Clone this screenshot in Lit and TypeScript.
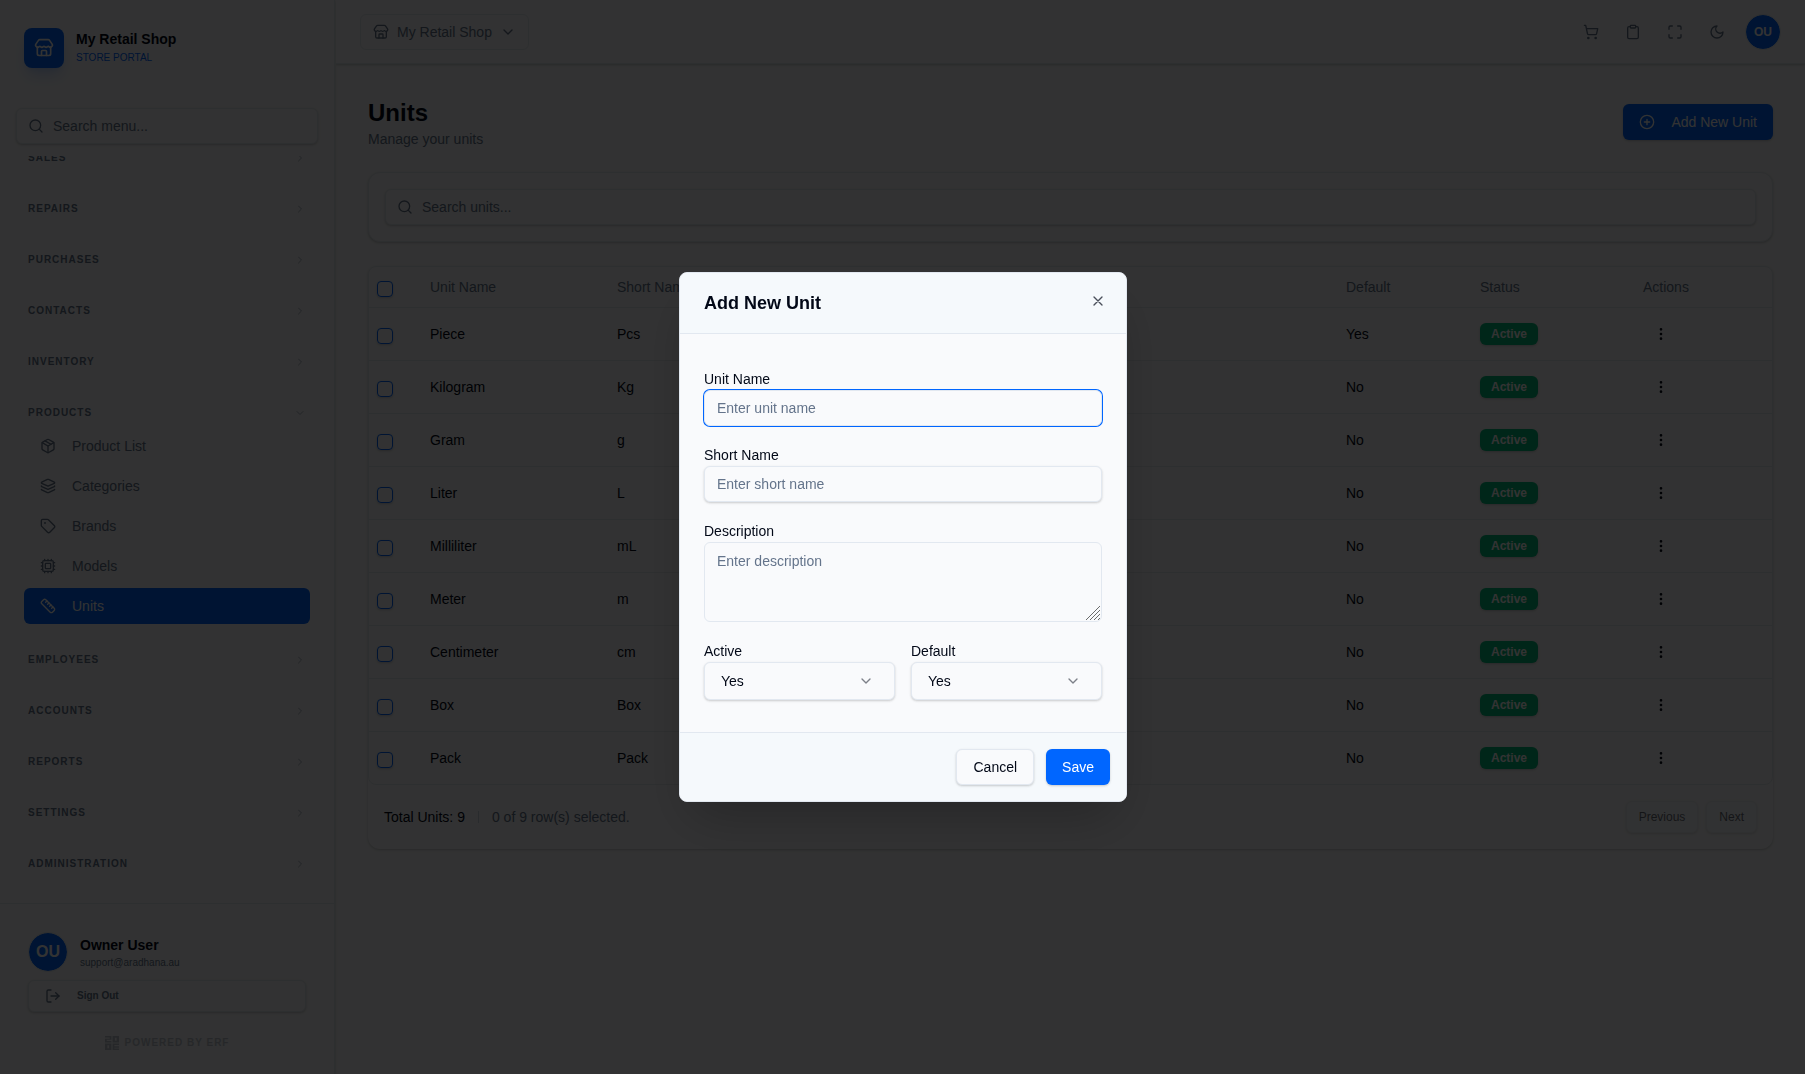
import { LitElement, html, css, svg } from "lit";
import { customElement, property, state } from "lit/decorators.js";
import { classMap } from "lit/directives/class-map.js";

const ICONS: Record<string, unknown> = {
  store: svg`<path d="M15 21v-5a1 1 0 0 0-1-1h-4a1 1 0 0 0-1 1v5"/><path d="M17.774 10.31a1.12 1.12 0 0 0-1.549 0 2.5 2.5 0 0 1-3.451 0 1.12 1.12 0 0 0-1.548 0 2.5 2.5 0 0 1-3.452 0 1.12 1.12 0 0 0-1.549 0 2.5 2.5 0 0 1-3.77-3.248l2.889-4.184A2 2 0 0 1 7 2h10a2 2 0 0 1 1.653.873l2.895 4.192a2.5 2.5 0 0 1-3.774 3.244"/><path d="M4 10.95V19a2 2 0 0 0 2 2h12a2 2 0 0 0 2-2v-8.05"/>`,
  search: svg`<circle cx="11" cy="11" r="8"/><path d="m21 21-4.300-4.300"/>`,
  chevronRight: svg`<path d="m9 18 6-6-6-6"/>`,
  chevronDown: svg`<path d="m6 9 6 6 6-6"/>`,
  package: svg`<path d="M11 21.73a2 2 0 0 0 2 0l7-4A2 2 0 0 0 21 16V8a2 2 0 0 0-1-1.730l-7-4a2 2 0 0 0-2 0l-7 4A2 2 0 0 0 3 8v8a2 2 0 0 0 1 1.730z"/><path d="M12 22V12"/><path d="M3.290 7 12 12l8.710-5"/><path d="m7.500 4.270 9 5.150"/>`,
  layers: svg`<path d="M12.830 2.180a2 2 0 0 0-1.660 0L2.600 6.080a1 1 0 0 0 0 1.830l8.580 3.910a2 2 0 0 0 1.660 0l8.580-3.900a1 1 0 0 0 0-1.830z"/><path d="M2 12a1 1 0 0 0 .58.91l8.600 3.910a2 2 0 0 0 1.650 0l8.580-3.900A1 1 0 0 0 22 12"/><path d="M2 17a1 1 0 0 0 .58.91l8.600 3.910a2 2 0 0 0 1.650 0l8.580-3.900A1 1 0 0 0 22 17"/>`,
  tag: svg`<path d="M12.586 2.586A2 2 0 0 0 11.172 2H4a2 2 0 0 0-2 2v7.172a2 2 0 0 0 .586 1.414l8.704 8.704a2.426 2.426 0 0 0 3.420 0l6.580-6.580a2.426 2.426 0 0 0 0-3.420z"/><circle cx="7.500" cy="7.500" r=".5" fill="currentColor"/>`,
  cpu: svg`<rect x="4" y="4" width="16" height="16" rx="2"/><rect x="8" y="8" width="8" height="8" rx="1"/><path d="M12 20v2M12 2v2M17 20v2M17 2v2M2 12h2M2 17h2M2 7h2M20 12h2M20 17h2M20 7h2M7 20v2M7 2v2"/>`,
  ruler: svg`<path d="M21.300 15.300a2.400 2.400 0 0 1 0 3.400l-2.600 2.600a2.400 2.400 0 0 1-3.400 0L2.700 8.700a2.410 2.410 0 0 1 0-3.400l2.600-2.600a2.410 2.410 0 0 1 3.400 0z"/><path d="m14.500 12.500 2-2M11.500 9.500l2-2M8.500 6.500l2-2M17.500 15.500l2-2"/>`,
  logout: svg`<path d="m16 17 5-5-5-5"/><path d="M21 12H9"/><path d="M9 21H5a2 2 0 0 1-2-2V5a2 2 0 0 1 2-2h4"/>`,
  cart: svg`<circle cx="8" cy="21" r="1"/><circle cx="19" cy="21" r="1"/><path d="M2.050 2.050h2l2.660 12.420a2 2 0 0 0 2 1.580h9.780a2 2 0 0 0 1.950-1.570l1.650-7.430H5.120"/>`,
  clipboard: svg`<rect x="8" y="2" width="8" height="4" rx="1"/><path d="M16 4h2a2 2 0 0 1 2 2v14a2 2 0 0 1-2 2H6a2 2 0 0 1-2-2V6a2 2 0 0 1 2-2h2"/>`,
  expand: svg`<path d="M8 3H5a2 2 0 0 0-2 2v3M21 8V5a2 2 0 0 0-2-2h-3M3 16v3a2 2 0 0 0 2 2h3M16 21h3a2 2 0 0 0 2-2v-3"/>`,
  moon: svg`<path d="M12 3a6 6 0 0 0 9 9 9 9 0 1 1-9-9Z"/>`,
  plus: svg`<circle cx="12" cy="12" r="10"/><path d="M8 12h8M12 8v8"/>`,
  close: svg`<path d="M18 6 6 18M6 6l12 12"/>`,
  dots: svg`<circle cx="12" cy="12" r="1"/><circle cx="12" cy="5" r="1"/><circle cx="12" cy="19" r="1"/>`,
  blocks: svg`<g fill="currentColor" stroke="none"><path d="M0 0h11v6.500H3v2h8V11H0V4.500h8v-2H0z"/><path fill-rule="evenodd" d="M13 0h11v11H13zM17 3v5h3V3z"/><path fill-rule="evenodd" d="M0 13h11v11H0zM4 16v5h3v-5z"/><path d="M13 13h11v2.500h-8v2h8v2.500h-8v1.500h8V24H13z"/></g>`,
};

@customElement("ui-icon")
class UiIcon extends LitElement {
  @property() name = "";
  @property({ type: Number }) size = 16;

  static styles = css`
    :host { display: inline-flex; flex: none; }
    svg { display: block; fill: none; stroke: currentColor; stroke-width: 2; stroke-linecap: round; stroke-linejoin: round; }
  `;

  render() {
    return html`<svg aria-hidden="true" viewBox="0 0 24 24" width=${this.size} height=${this.size}>${ICONS[this.name]}</svg>`;
  }
}

const tokens = css`
  :host {
    --bg: #f8fafc;
    --surface: #f9fafc;
    --tint: #f5f9fc;
    --fg: #020817;
    --muted: #64748b;
    --line: #e2e8f0;
    --primary: #0066ff;
    --shadow: 0 1px 3px rgba(0, 0, 0, 0.1), 0 1px 2px rgba(0, 0, 0, 0.1);
    color: var(--fg);
    font-family: "Liberation Sans", Arial, sans-serif;
    font-size: 14px;
    line-height: 20px;
  }
  * { box-sizing: border-box; }
  h1, h2, p { margin: 0; }
  a { color: inherit; text-decoration: none; }
  button, input, textarea, select { font: inherit; color: inherit; margin: 0; }
  button { cursor: pointer; background: none; border: 0; padding: 0; }
  ::placeholder { color: var(--muted); opacity: 1; }
  .input {
    display: block;
    width: 100%;
    height: 36px;
    padding: 0 12px;
    border: 1px solid var(--line);
    border-radius: 6px;
    background: var(--surface);
    box-shadow: var(--shadow);
    outline: none;
  }
  .input:focus { box-shadow: 0 0 0 1px var(--primary); }
  .search { display: grid; align-items: center; isolation: isolate; color: var(--muted); }
  .search > * { grid-area: 1 / 1; }
  .search ui-icon { margin-left: 12px; z-index: 1; pointer-events: none; }
  .search .input { padding-left: 36px; }
  .avatar {
    display: grid;
    place-items: center;
    flex: none;
    border: 1px solid var(--line);
    border-radius: 50%;
    background: var(--primary);
    background-clip: padding-box;
    color: #fff;
    font-weight: 700;
  }
  .button {
    display: inline-flex;
    align-items: center;
    justify-content: center;
    height: 36px;
    padding: 0 16px;
    border-radius: 6px;
    box-shadow: var(--shadow);
    white-space: nowrap;
  }
  .primary { background: var(--primary); color: #fff; }
  .outline { background: var(--surface); border: 1px solid var(--line); }
`;

interface Group { label: string; items?: { label: string; icon: string; active?: boolean }[] }

const GROUPS: Group[] = [
  { label: "SALES" },
  { label: "REPAIRS" },
  { label: "PURCHASES" },
  { label: "CONTACTS" },
  { label: "INVENTORY" },
  {
    label: "PRODUCTS",
    items: [
      { label: "Product List", icon: "package" },
      { label: "Categories", icon: "layers" },
      { label: "Brands", icon: "tag" },
      { label: "Models", icon: "cpu" },
      { label: "Units", icon: "ruler", active: true },
    ],
  },
  { label: "EMPLOYEES" },
  { label: "ACCOUNTS" },
  { label: "REPORTS" },
  { label: "SETTINGS" },
  { label: "ADMINISTRATION" },
];

@customElement("app-sidebar")
class AppSidebar extends LitElement {
  static styles = [tokens, css`
    :host {
      display: flex;
      flex-direction: column;
      min-height: 0;
      background: var(--surface);
      border-right: 1px solid var(--line);
      box-shadow: var(--shadow);
    }
    .brand { display: flex; align-items: center; gap: 12px; padding: 28px 24px 40px; }
    .logo {
      display: grid;
      place-items: center;
      width: 40px;
      height: 40px;
      border-radius: 8px;
      background: var(--primary);
      color: #fff;
      box-shadow: 0 10px 15px -3px rgba(0, 102, 255, 0.2), 0 4px 6px -4px rgba(0, 102, 255, 0.2);
    }
    .names { display: grid; gap: 1px; padding-bottom: 2px; }
    .store { font-weight: 700; }
    .portal { font-size: 10px; line-height: 15px; color: var(--primary); }
    .search { margin: 0 16px 12px; }
    nav {
      flex: 1;
      min-height: 0;
      overflow-y: auto;
      scrollbar-width: none;
      padding: 0 24px 24px;
    }
    .groups { display: grid; gap: 20px; }
    .group {
      display: flex;
      align-items: center;
      justify-content: space-between;
      width: 100%;
      height: 31px;
      padding: 0 4px;
      color: var(--muted);
      font-size: 10px;
      font-weight: 700;
      letter-spacing: 1px;
    }
    .group ui-icon { opacity: 0.5; }
    .items { display: grid; gap: 4px; }
    .item {
      display: flex;
      align-items: center;
      gap: 16px;
      height: 36px;
      padding: 0 16px;
      border-radius: 6px;
      color: var(--muted);
    }
    .item.active { background: var(--primary); color: #fff; }
    footer { padding: 16px 16px 24px; border-top: 1px solid var(--line); }
    .card { display: grid; gap: 8px; padding: 12px; border-radius: 12px; background: var(--bg); }
    .user { display: flex; align-items: center; gap: 12px; }
    .avatar { width: 40px; height: 40px; font-size: 16px; }
    .name { font-weight: 700; }
    .mail { font-size: 10px; line-height: 15px; color: var(--muted); }
    .signout {
      height: 32px;
      gap: 16px;
      justify-content: flex-start;
      font-size: 10px;
      font-weight: 700;
      color: var(--muted);
    }
    .powered {
      display: flex;
      align-items: center;
      justify-content: center;
      gap: 6px;
      margin-top: 11px;
      font-size: 10px;
      line-height: 15px;
      font-weight: 700;
      letter-spacing: 1px;
      color: var(--muted);
      opacity: 0.4;
    }
  `];

  firstUpdated() {
    const nav = this.renderRoot.querySelector("nav")!;
    nav.scrollTop = nav.scrollHeight;
  }

  render() {
    return html`
      <div class="brand">
        <span class="logo"><ui-icon name="store" size="20"></ui-icon></span>
        <div class="names">
          <div class="store">My Retail Shop</div>
          <div class="portal">STORE PORTAL</div>
        </div>
      </div>
      <div class="search">
        <ui-icon name="search"></ui-icon>
        <input class="input" type="search" placeholder="Search menu..." aria-label="Search menu" />
      </div>
      <nav>
        <div class="groups">
          ${GROUPS.map((group) => html`
            <div>
              <button class="group" aria-expanded=${group.items ? "true" : "false"}>
                ${group.label}
                <ui-icon name=${group.items ? "chevronDown" : "chevronRight"} size="12"></ui-icon>
              </button>
              ${group.items ? html`<div class="items">
                ${group.items.map((item) => html`
                  <a href="#" class=${classMap({ item: true, active: !!item.active })}>
                    <ui-icon name=${item.icon}></ui-icon>${item.label}
                  </a>`)}
              </div>` : null}
            </div>`)}
        </div>
      </nav>
      <footer>
        <div class="card">
          <div class="user">
            <span class="avatar">OU</span>
            <div>
              <div class="name">Owner User</div>
              <div class="mail">support@aradhana.au</div>
            </div>
          </div>
          <button class="button outline signout"><ui-icon name="logout"></ui-icon>Sign Out</button>
        </div>
        <div class="powered"><ui-icon name="blocks" size="14"></ui-icon>POWERED BY ERF</div>
      </footer>
    `;
  }
}

@customElement("app-header")
class AppHeader extends LitElement {
  static styles = [tokens, css`
    :host {
      display: flex;
      align-items: center;
      justify-content: space-between;
      height: 64px;
      padding: 0 24px;
      background: var(--surface);
      border-bottom: 1px solid var(--line);
      box-shadow: var(--shadow);
    }
    .shop { gap: 8px; padding: 0 12px; color: var(--muted); box-shadow: none; }
    .tools { display: flex; align-items: center; gap: 6px; }
    .tool { display: grid; place-items: center; width: 36px; height: 36px; color: var(--muted); }
    .avatar { width: 36px; height: 36px; margin-left: 4px; padding: 0; font-size: 12px; }
  `];

  render() {
    return html`
      <button class="button outline shop">
        <ui-icon name="store"></ui-icon>My Retail Shop<ui-icon name="chevronDown"></ui-icon>
      </button>
      <div class="tools">
        <button class="tool" aria-label="Point of sale"><ui-icon name="cart"></ui-icon></button>
        <button class="tool" aria-label="Orders"><ui-icon name="clipboard"></ui-icon></button>
        <button class="tool" aria-label="Full screen"><ui-icon name="expand"></ui-icon></button>
        <button class="tool" aria-label="Dark mode"><ui-icon name="moon"></ui-icon></button>
        <button class="avatar" aria-label="Account">OU</button>
      </div>
    `;
  }
}

const UNITS = [
  ["Piece", "Pcs", "Yes"],
  ["Kilogram", "Kg", "No"],
  ["Gram", "g", "No"],
  ["Liter", "L", "No"],
  ["Milliliter", "mL", "No"],
  ["Meter", "m", "No"],
  ["Centimeter", "cm", "No"],
  ["Box", "Box", "No"],
  ["Pack", "Pack", "No"],
];

@customElement("units-page")
class UnitsPage extends LitElement {
  static styles = [tokens, css`
    :host { display: grid; align-content: start; gap: 24px; padding: 32px; }
    .top { display: flex; align-items: center; justify-content: space-between; }
    h1 { font-size: 24px; line-height: 34px; font-weight: 700; }
    .sub { line-height: 18px; color: var(--muted); }
    .add { gap: 16px; }
    .filter {
      padding: 16px;
      border: 1px solid var(--line);
      border-radius: 12px;
      background: var(--surface);
      box-shadow: var(--shadow);
    }
    .list { border-radius: 8px 8px 12px 12px; background: var(--surface); box-shadow: var(--shadow); }
    .frame { border: 1px solid var(--line); border-radius: 8px; overflow: hidden; }
    table { width: 100%; table-layout: fixed; border-collapse: separate; border-spacing: 0; }
    th, td { padding: 0 8px; text-align: left; font-weight: 400; border-bottom: 1px solid var(--line); }
    th { height: 41px; color: var(--muted); }
    td { height: 53px; }
    tbody tr:last-child td { height: 52px; border-bottom: 0; }
    .check { width: 53px; padding-top: 4px; }
    .name { width: 187px; }
    .default { width: 134px; }
    .status { width: 163px; }
    .actions { width: 137px; }
    input[type="checkbox"] {
      appearance: none;
      display: block;
      width: 16px;
      height: 16px;
      border: 1px solid var(--primary);
      border-radius: 4px;
      box-shadow: var(--shadow);
    }
    .badge {
      display: inline-block;
      padding: 3px 11px;
      border-radius: 6px;
      background: #00bc7d;
      color: #fff;
      font-size: 12px;
      line-height: 16px;
      font-weight: 700;
      box-shadow: var(--shadow);
      vertical-align: middle;
    }
    .more { display: grid; place-items: center; width: 36px; height: 36px; }
    .foot { display: flex; align-items: center; justify-content: space-between; padding: 16px; }
    .counts { display: flex; align-items: center; gap: 13px; }
    .rule { width: 1px; height: 12px; background: #cbd5e1; }
    .muted { color: var(--muted); }
    .pager { display: flex; gap: 8px; }
    .page { height: 32px; padding: 0 12px; font-size: 12px; background: var(--tint); opacity: 0.6; }
  `];

  render() {
    return html`
      <div class="top">
        <div>
          <h1>Units</h1>
          <p class="sub">Manage your units</p>
        </div>
        <button class="button primary add"><ui-icon name="plus"></ui-icon>Add New Unit</button>
      </div>
      <div class="filter">
        <div class="search">
          <ui-icon name="search"></ui-icon>
          <input class="input" type="search" placeholder="Search units..." aria-label="Search units" />
        </div>
      </div>
      <div class="list">
        <div class="frame">
          <table>
            <thead>
              <tr>
                <th class="check"><input type="checkbox" aria-label="Select all" /></th>
                <th class="name">Unit Name</th>
                <th>Short Name</th>
                <th class="default">Default</th>
                <th class="status">Status</th>
                <th class="actions">Actions</th>
              </tr>
            </thead>
            <tbody>
              ${UNITS.map(([name, short, isDefault]) => html`
                <tr>
                  <td class="check"><input type="checkbox" aria-label="Select ${name}" /></td>
                  <td>${name}</td>
                  <td>${short}</td>
                  <td>${isDefault}</td>
                  <td><span class="badge">Active</span></td>
                  <td><button class="more" aria-label="Actions for ${name}"><ui-icon name="dots"></ui-icon></button></td>
                </tr>`)}
            </tbody>
          </table>
        </div>
        <div class="foot">
          <div class="counts">
            <span>Total Units: ${UNITS.length}</span>
            <span class="rule"></span>
            <span class="muted">0 of ${UNITS.length} row(s) selected.</span>
          </div>
          <div class="pager">
            <button class="button outline page" disabled>Previous</button>
            <button class="button outline page" disabled>Next</button>
          </div>
        </div>
      </div>
    `;
  }
}

@customElement("unit-dialog")
class UnitDialog extends LitElement {
  static styles = [tokens, css`
    :host {
      position: fixed;
      inset: 0;
      z-index: 10;
      display: grid;
      place-items: center;
      padding: 16px 15px 16px 16px;
      background: rgba(0, 0, 0, 0.8);
    }
    .dialog {
      width: 100%;
      max-width: 448px;
      border: 1px solid var(--line);
      border-radius: 8px;
      overflow: hidden;
      background: var(--surface);
      box-shadow: 0 25px 50px -12px rgba(0, 0, 0, 0.25);
    }
    header {
      display: flex;
      align-items: flex-start;
      justify-content: space-between;
      padding: 20px 20px 20px 24px;
      background: var(--tint);
      border-bottom: 1px solid var(--line);
    }
    h2 { font-size: 18px; line-height: 20px; font-weight: 700; }
    .close { display: flex; opacity: 0.7; }
    .body { display: grid; gap: 18px; padding: 34px 24px 32px; }
    .pair { display: grid; grid-template-columns: 1fr 1fr; gap: 16px; }
    label { display: block; line-height: 22px; }
    .area { display: grid; }
    .area > * { grid-area: 1 / 1; }
    .description { height: 80px; padding: 8px 12px; box-shadow: none; resize: none; }
    .grip { place-self: end; width: 14px; height: 14px; margin: 2px; stroke: #6b6b6b; pointer-events: none; }
    .select { display: grid; align-items: center; }
    .select > * { grid-area: 1 / 1; }
    .select .input { height: 38px; padding: 0 16px; appearance: none; }
    .select ui-icon { justify-self: end; margin-right: 21px; opacity: 0.5; pointer-events: none; }
    footer {
      display: flex;
      justify-content: flex-end;
      gap: 12px;
      padding: 16px;
      background: var(--tint);
      border-top: 1px solid var(--line);
    }
  `];

  firstUpdated() {
    this.renderRoot.querySelector<HTMLInputElement>("#unit-name")!.focus();
  }

  private choice(id: string, label: string) {
    return html`
      <div>
        <label for=${id}>${label}</label>
        <div class="select">
          <select class="input" id=${id}><option>Yes</option><option>No</option></select>
          <ui-icon name="chevronDown"></ui-icon>
        </div>
      </div>`;
  }

  private close() {
    this.dispatchEvent(new CustomEvent("dismiss"));
  }

  render() {
    return html`
      <section class="dialog" role="dialog" aria-modal="true" aria-labelledby="title">
        <header>
          <h2 id="title">Add New Unit</h2>
          <button class="close" aria-label="Close" @click=${this.close}><ui-icon name="close"></ui-icon></button>
        </header>
        <div class="body">
          <div>
            <label for="unit-name">Unit Name</label>
            <input class="input" id="unit-name" placeholder="Enter unit name" />
          </div>
          <div>
            <label for="short-name">Short Name</label>
            <input class="input" id="short-name" placeholder="Enter short name" />
          </div>
          <div>
            <label for="description">Description</label>
            <div class="area">
              <textarea class="input description" id="description" placeholder="Enter description"></textarea>
              <svg class="grip" viewBox="0 0 14 14" aria-hidden="true"><path d="M0 14 14 0M4 14 14 4M8 14l6-6M12 14l2-2"/></svg>
            </div>
          </div>
          <div class="pair">
            ${this.choice("active", "Active")}
            ${this.choice("default", "Default")}
          </div>
        </div>
        <footer>
          <button class="button outline" @click=${this.close}>Cancel</button>
          <button class="button primary">Save</button>
        </footer>
      </section>
    `;
  }
}

@customElement("app-root")
class AppRoot extends LitElement {
  @state() private adding = true;

  static styles = [tokens, css`
    :host {
      display: grid;
      grid-template-columns: 335px minmax(0, 1fr);
      column-gap: 1px;
      height: 100vh;
      background: var(--bg);
    }
    main { min-width: 0; overflow: auto; }
  `];

  render() {
    return html`
      <app-sidebar></app-sidebar>
      <main>
        <app-header></app-header>
        <units-page></units-page>
      </main>
      ${this.adding ? html`<unit-dialog @dismiss=${() => (this.adding = false)}></unit-dialog>` : null}
    `;
  }
}
